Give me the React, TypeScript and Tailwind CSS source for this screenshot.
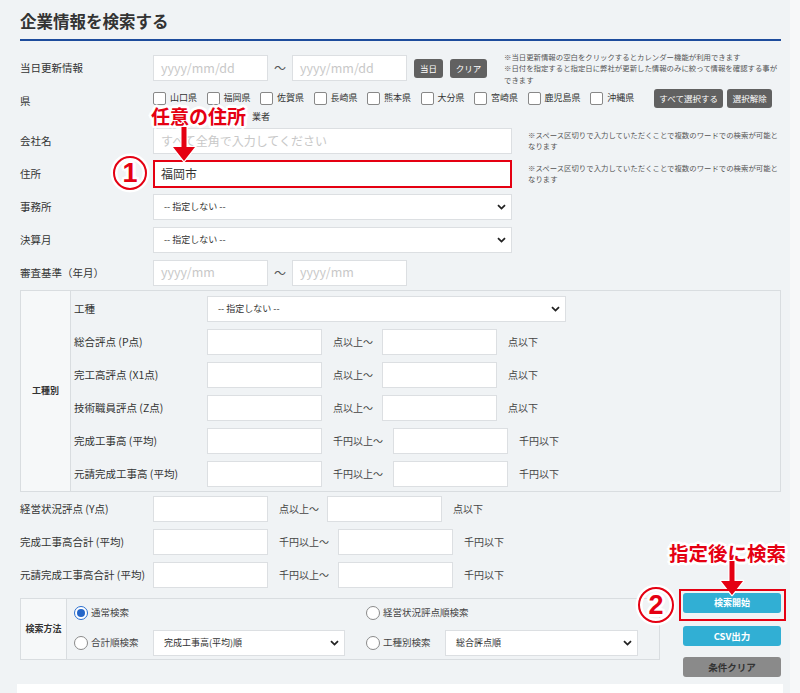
import React from "react";

const RED = "#e50012";
const halo =
  "[text-shadow:2px_0_#fff,-2px_0_#fff,0_2px_#fff,0_-2px_#fff,2px_2px_#fff,-2px_-2px_#fff,2px_-2px_#fff,-2px_2px_#fff,3px_0_#fff,-3px_0_#fff,0_3px_#fff,0_-3px_#fff]";

function Input({ w, ph, value, cls = "" }: { w: string; ph?: string; value?: string; cls?: string }) {
  return (
    <div className={`${w} h-[26px] bg-white border border-[#dcdfe2] flex items-center pl-[7px] shrink-0 ${cls}`}>
      {value ? (
        <span className="text-[12px] text-[#333]">{value}</span>
      ) : ph ? (
        <span className="text-[12.5px] text-[#c8c8c8] whitespace-nowrap">{ph}</span>
      ) : null}
    </div>
  );
}

function Chevron() {
  return (
    <svg width="9" height="6" viewBox="0 0 9 6">
      <path d="M1 1.2 L4.5 4.6 L8 1.2" fill="none" stroke="#222" strokeWidth="1.8" />
    </svg>
  );
}

function Select({ w, text }: { w: string; text: string }) {
  return (
    <div className={`${w} h-[26px] bg-white border border-[#dcdfe2] flex items-center justify-between pl-[10px] pr-[5px] shrink-0`}>
      <span className="text-[9px] text-[#333] whitespace-nowrap">{text}</span>
      <Chevron />
    </div>
  );
}

function Check({ label }: { label: string }) {
  return (
    <div className="flex items-center mr-[9.5px] shrink-0">
      <div className="w-[13px] h-[13px] bg-white border border-[#888] rounded-[2px]" />
      <span className="ml-[4px] text-[9px] leading-[12px] text-[#333] whitespace-nowrap">{label}</span>
    </div>
  );
}

function GrayBtn({ w, text }: { w: string; text: string }) {
  return (
    <div className={`${w} h-[19px] rounded-[3px] bg-[#616161] text-white text-[8.5px] flex items-center justify-center shrink-0 whitespace-nowrap`}>
      {text}
    </div>
  );
}

function Radio({ checked, label }: { checked?: boolean; label: string }) {
  return (
    <div className="flex items-center shrink-0">
      <div
        className={`w-[14px] h-[14px] rounded-full bg-white border flex items-center justify-center ${
          checked ? "border-[#2a6fd0]" : "border-[#8a8a8a]"
        }`}
      >
        {checked && <div className="w-[8px] h-[8px] rounded-full bg-[#2566c8]" />}
      </div>
      <span className="ml-[3px] text-[9.5px] text-[#444] whitespace-nowrap">{label}</span>
    </div>
  );
}

const lab = "w-[133px] shrink-0 text-[10.5px] text-[#333] whitespace-nowrap";
const unit = "shrink-0 text-[10px] text-[#444] whitespace-nowrap pl-[11px]";
const note = "text-[7.4px] leading-[10.5px] text-[#555] whitespace-nowrap";

function RangeRow({ label, u1, u1w, u2, labCls = lab, h = "h-[33px]" }: { label: string; u1: string; u1w: string; u2: string; labCls?: string; h?: string }) {
  return (
    <div className={`flex items-center ${h}`}>
      <div className={labCls}>{label}</div>
      <Input w="w-[115px]" />
      <div className={`${unit} ${u1w}`}>{u1}</div>
      <Input w="w-[115px]" />
      <div className={`${unit} pl-[10px]`}>{u2}</div>
    </div>
  );
}

function DownArrow({ cls }: { cls: string }) {
  return (
    <svg className={cls} width="30" height="38" viewBox="0 0 30 38">
      <path d="M12.5 1 H17.5 V21 H26 L15 35 L4 21 H12.5 Z" fill={RED} stroke="#fff" strokeWidth="2.5" paintOrder="stroke" strokeLinejoin="round" />
    </svg>
  );
}

function Circled({ n, cls }: { n: string; cls: string }) {
  return (
    <div
      className={`absolute rounded-full border-[2.5px] border-[#e50012] bg-transparent flex items-center justify-center shadow-[0_0_0_2.5px_#fff,inset_0_0_0_2.5px_#fff] ${cls}`}
    >
      <span className={`text-[27px] font-bold text-[#e50012] leading-none font-['Liberation_Sans',sans-serif] ${halo}`}>{n}</span>
    </div>
  );
}

export default function App() {
  return (
    <div className="w-[800px] h-[693px] bg-[#f7f8f9] relative overflow-hidden font-['Noto_Sans_CJK_JP','Noto_Sans',sans-serif]">
      <div className="w-[790px] h-[693px] bg-[#f0f3f5] pl-[20px] pr-[9px] relative">
        {/* title */}
        <div className="h-[41px] border-b-2 border-[#1d4c9c] pt-[9px]">
          <h1 className="text-[16.5px] leading-[24px] font-bold text-[#333]">企業情報を検索する</h1>
        </div>

        {/* 当日更新情報 */}
        <div className="mt-[9px] h-[36px] flex items-center">
          <div className={lab}>当日更新情報</div>
          <Input w="w-[115px]" ph="yyyy/mm/dd" />
          <div className="w-[24px] text-center text-[12px] text-[#555] shrink-0">～</div>
          <Input w="w-[115px]" ph="yyyy/mm/dd" />
          <div className="ml-[7px]"><GrayBtn w="w-[29px]" text="当日" /></div>
          <div className="ml-[7px]"><GrayBtn w="w-[37px]" text="クリア" /></div>
          <div className={`ml-[17px] ${note} leading-[11.5px]`}>
            ※当日更新情報の空白をクリックするとカレンダー機能が利用できます
            <br />
            ※日付を指定すると指定日に弊社が更新した情報のみに絞って情報を確認する事が
            <br />
            できます
          </div>
        </div>

        {/* 県 */}
        <div className="h-[38px] flex">
          <div className={`${lab} pt-[7px]`}>県</div>
          <div className="flex flex-col">
            <div className="flex items-center h-[24px]">
              {["山口県", "福岡県", "佐賀県", "長崎県", "熊本県", "大分県", "宮崎県", "鹿児島県", "沖縄県"].map((p) => (
                <Check key={p} label={p} />
              ))}
              <div className="ml-[10.5px]"><GrayBtn w="w-[69px]" text="すべて選択する" /></div>
              <div className="ml-[4px]"><GrayBtn w="w-[45px]" text="選択解除" /></div>
            </div>
            <div className="h-[14px] flex items-center pl-[99px]">
              <span className="text-[9px] text-[#333] whitespace-nowrap">業者</span>
            </div>
          </div>
        </div>

        {/* 会社名 */}
        <div className="h-[33px] flex items-center">
          <div className={lab}>会社名</div>
          <Input w="w-[359px]" ph="すべて全角で入力してください" cls="[&>span]:text-[12px]" />
          <div className={`ml-[16px] ${note}`}>
            ※スペース区切りで入力していただくことで複数のワードでの検索が可能と
            <br />
            なります
          </div>
        </div>

        {/* 住所 */}
        <div className="h-[33px] flex items-center">
          <div className={lab}>住所</div>
          <div className="w-[359px] h-[28px] bg-white border-2 border-[#e50012] flex items-center pl-[6px] shrink-0">
            <span className="text-[12px] text-[#333]">福岡市</span>
          </div>
          <div className={`ml-[16px] ${note}`}>
            ※スペース区切りで入力していただくことで複数のワードでの検索が可能と
            <br />
            なります
          </div>
        </div>

        {/* 事務所 */}
        <div className="h-[33px] flex items-center">
          <div className={lab}>事務所</div>
          <Select w="w-[359px]" text="-- 指定しない --" />
        </div>

        {/* 決算月 */}
        <div className="h-[33px] flex items-center">
          <div className={lab}>決算月</div>
          <Select w="w-[359px]" text="-- 指定しない --" />
        </div>

        {/* 審査基準 */}
        <div className="h-[33px] flex items-center">
          <div className={lab}>審査基準（年月）</div>
          <Input w="w-[115px]" ph="yyyy/mm" />
          <div className="w-[24px] text-center text-[12px] text-[#555] shrink-0">～</div>
          <Input w="w-[115px]" ph="yyyy/mm" />
        </div>

        {/* 工種別 box */}
        <div className="mt-[1px] w-[761px] border border-[#d9dde0] flex">
          <div className="w-[50px] shrink-0 border-r border-[#d9dde0] bg-[#f6f8f9] flex items-center justify-center">
            <span className="text-[9px] font-bold text-[#333]">工種別</span>
          </div>
          <div className="pl-[3px] pt-[1px] pb-[1px] flex flex-col">
            <div className="h-[33px] flex items-center">
              <div className={lab}>工種</div>
              <Select w="w-[359px]" text="-- 指定しない --" />
            </div>
            <RangeRow label="総合評点 (P点)" u1="点以上～" u1w="w-[60px]" u2="点以下" />
            <RangeRow label="完工高評点 (X1点)" u1="点以上～" u1w="w-[60px]" u2="点以下" />
            <RangeRow label="技術職員評点 (Z点)" u1="点以上～" u1w="w-[60px]" u2="点以下" />
            <RangeRow label="完成工事高 (平均)" u1="千円以上～" u1w="w-[71px]" u2="千円以下" />
            <RangeRow label="元請完成工事高 (平均)" u1="千円以上～" u1w="w-[71px]" u2="千円以下" />
          </div>
        </div>

        <RangeRow label="経営状況評点 (Y点)" u1="点以上～" u1w="w-[59px]" u2="点以下" />
        <RangeRow label="完成工事高合計 (平均)" u1="千円以上～" u1w="w-[70px]" u2="千円以下" />
        <RangeRow label="元請完成工事高合計 (平均)" u1="千円以上～" u1w="w-[70px]" u2="千円以下" />

        {/* bottom */}
        <div className="mt-[2px] flex items-start">
          <div className="mt-[5px] w-[640px] h-[62px] border border-[#d9dde0] flex">
            <div className="w-[46px] shrink-0 border-r border-[#d9dde0] bg-[#f6f8f9] flex items-center justify-center">
              <span className="text-[9px] font-bold text-[#333] whitespace-nowrap">検索方法</span>
            </div>
            <div className="flex-1 pl-[7px] flex flex-col">
              <div className="h-[27px] flex items-center">
                <div className="w-[292px]"><Radio checked label="通常検索" /></div>
                <Radio label="経営状況評点順検索" />
              </div>
              <div className="h-[33px] flex items-center">
                <div className="w-[79px]"><Radio label="合計順検索" /></div>
                <Select w="w-[192px]" text="完成工事高(平均)順" />
                <div className="ml-[21px] w-[79px]"><Radio label="工種別検索" /></div>
                <Select w="w-[193px]" text="総合評点順" />
              </div>
            </div>
          </div>
          <div className="ml-[23px] w-[98px] flex flex-col">
            <div className="h-[20px] rounded-[3px] bg-[#31afd4] text-white text-[9px] font-bold flex items-center justify-center">検索開始</div>
            <div className="mt-[13px] h-[20px] rounded-[3px] bg-[#31afd4] text-white text-[9.5px] font-bold flex items-center justify-center">CSV出力</div>
            <div className="mt-[11px] h-[20px] rounded-[3px] bg-[#8a8a8a] text-[#333] text-[9.5px] font-bold flex items-center justify-center">条件クリア</div>
          </div>
        </div>
      </div>

      {/* bottom white strip */}
      <div className="absolute left-[17px] top-[684px] w-[766px] h-[9px] bg-white" />

      {/* annotations */}
      <div className={`absolute left-[151px] top-[105px] text-[19px] font-bold text-[#e50012] leading-[22px] whitespace-nowrap ${halo}`}>任意の住所</div>
      <DownArrow cls="absolute left-[169px] top-[126px]" />
      <Circled n="1" cls="left-[113px] top-[156px] w-[34px] h-[34px]" />

      <div className={`absolute left-[669px] top-[542px] text-[19.5px] font-bold text-[#e50012] leading-[22px] whitespace-nowrap ${halo}`}>指定後に検索</div>
      <DownArrow cls="absolute left-[717px] top-[560px]" />
      <div className="absolute left-[679px] top-[589px] w-[107px] h-[32px] border-2 border-[#e50012]" />
      <Circled n="2" cls="left-[638px] top-[587px] w-[36px] h-[36px]" />
    </div>
  );
}
